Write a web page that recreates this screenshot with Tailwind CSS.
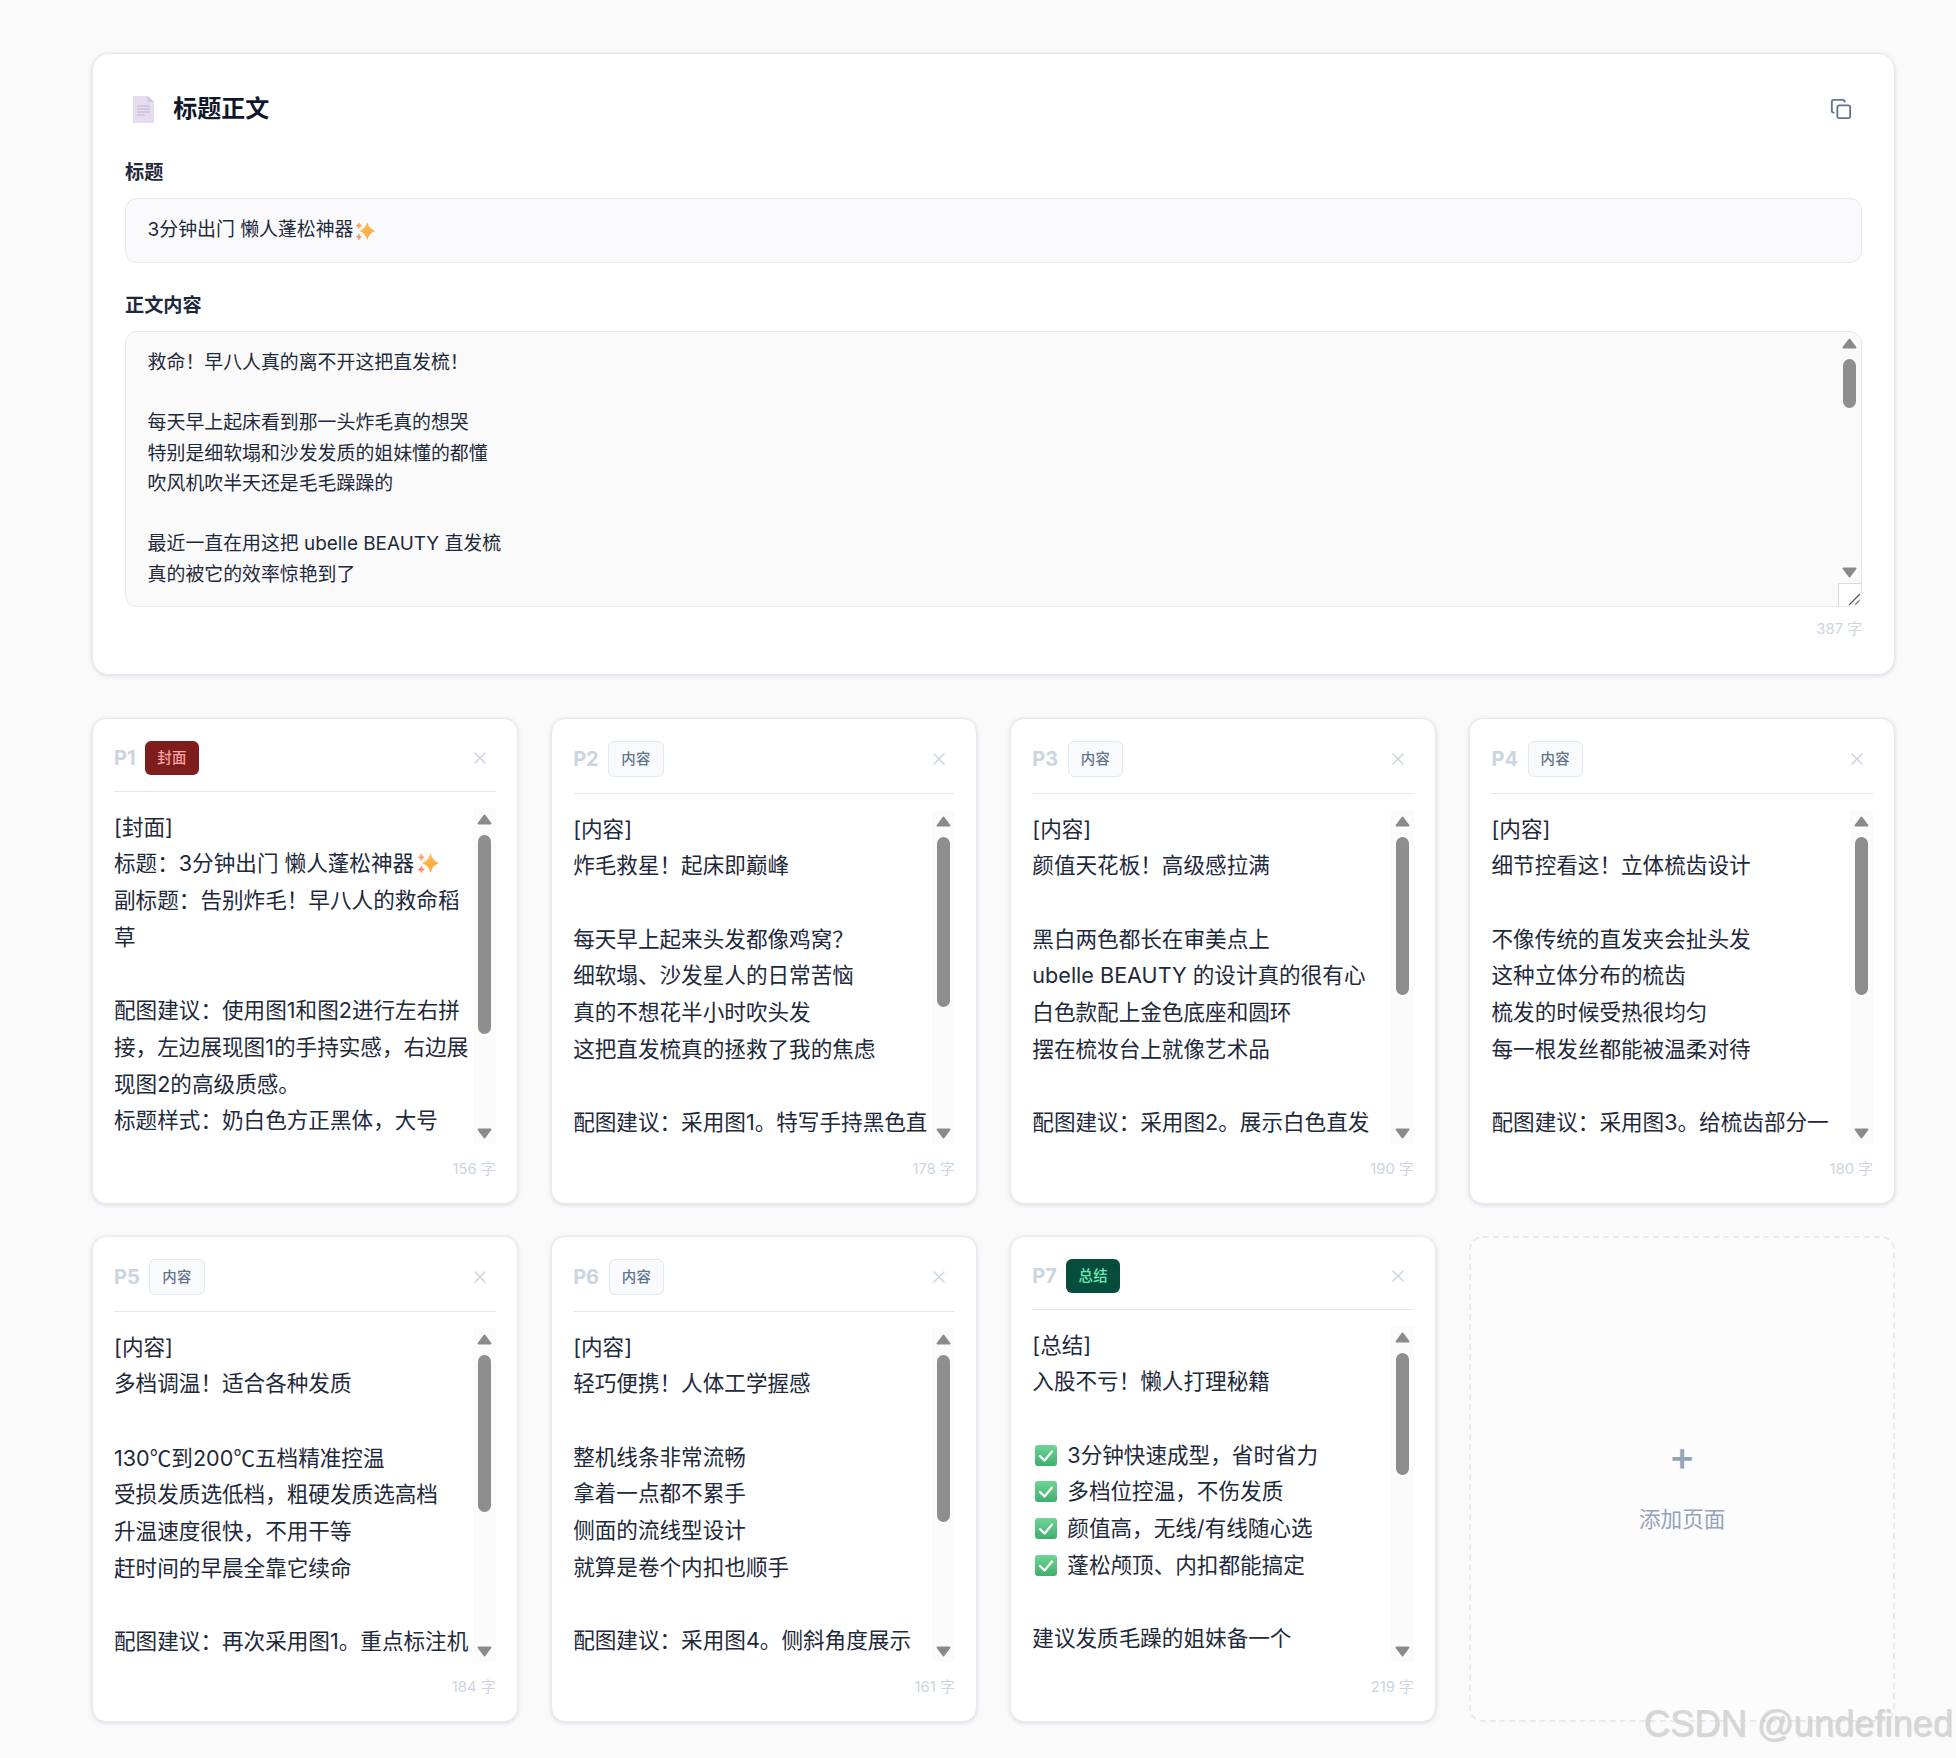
<!DOCTYPE html>
<html lang="zh-CN">
<head>
  <meta charset="UTF-8">
  <title>标题正文</title>
  <script src="https://cdn.jsdelivr.net/npm/@tailwindcss/browser@4"></script>
</head>
<body class="bg-[#fafafa] font-[Inter,'Noto_Sans_CJK_SC',sans-serif] min-h-[1758px] overflow-hidden relative">

<svg class="absolute w-0 h-0">
  <defs>
    <linearGradient id="star" x1="0" y1="0" x2="1" y2="1">
      <stop offset="0" stop-color="#ffc94d"/>
      <stop offset="1" stop-color="#ff9a3d"/>
    </linearGradient>
    <linearGradient id="tick" x1="0" y1="0" x2="0" y2="1">
      <stop offset="0" stop-color="#6fd596"/>
      <stop offset="1" stop-color="#3fae6c"/>
    </linearGradient>
    <symbol id="sparkles" viewBox="0 0 36 36">
      <path d="M22 2Q25.500 14.500 36 18Q25.500 21.500 22 34Q18.500 21.500 8 18Q18.500 14.500 22 2Z" fill="url(#star)"/>
      <path d="M7 2Q8 7 13 8.500Q8 10 7 15Q6 10 1 8.500Q6 7 7 2Z" fill="#ffa366"/>
      <path d="M7 22Q8 27 13 28.500Q8 30 7 35Q6 30 1 28.500Q6 27 7 22Z" fill="#ff8f73"/>
    </symbol>
    <symbol id="arrow-up" viewBox="0 0 15 11">
      <path d="M7.500 1.500L13.500 9.500H1.500Z" fill="#8a8a8a" stroke="#8a8a8a" stroke-width="2" stroke-linejoin="round"/>
    </symbol>
    <symbol id="arrow-down" viewBox="0 0 15 11">
      <path d="M1.500 1.500H13.500L7.500 9.500Z" fill="#8a8a8a" stroke="#8a8a8a" stroke-width="2" stroke-linejoin="round"/>
    </symbol>
    <symbol id="check" viewBox="0 0 22 22">
      <rect width="22" height="21" rx="3" fill="url(#tick)"/>
      <path d="M5 11L9.500 15.500L17 6.500" fill="none" stroke="#fff" stroke-width="2.200" stroke-linecap="round" stroke-linejoin="round"/>
    </symbol>
  </defs>
</svg>

<div class="ml-[92px] w-[1803px] pt-[53px]">

  <!-- title + body -->
  <section class="bg-white border border-[#e6eaf0] rounded-[17px] shadow-[0_1px_4px_rgba(148,163,184,0.35)] px-[32px] pt-[29px] h-[622px]">
    <div class="flex items-center h-[52px] mb-[25px]">
      <svg class="ml-[7.600px] w-[21px] h-[27px]" viewBox="0 0 20 27" preserveAspectRatio="none">
        <path d="M0 0H14L20 6V27H0Z" fill="#e6dcf0"/>
        <path d="M14 0L20 6H14Z" fill="#cfc6d8"/>
        <path d="M4 10H16M4 13H16M4 16H16M4 19H11" stroke="#bdb4c8" stroke-width="1.2"/>
      </svg>
      <h2 class="ml-[19.600px] text-[24px] font-bold text-[#0f172a]">标题正文</h2>
      <svg class="ml-auto mr-[10px] w-[22px] h-[22px]" viewBox="0 0 24 24" fill="none" stroke="#64748b" stroke-width="2" stroke-linecap="round" stroke-linejoin="round">
        <rect x="8" y="8" width="14" height="14" rx="2"/>
        <path d="M4 16c-1.1 0-2-.9-2-2V4c0-1.1.9-2 2-2h10c1.1 0 2 .9 2 2"/>
      </svg>
    </div>

    <label class="block text-[19.200px] leading-[24px] font-bold text-[#1e293b] mb-[14px]">标题</label>
    <div class="h-[65px] flex items-center px-[21.600px] bg-[#fafafc] border border-[#e2e8f0] rounded-[12px] text-[18.900px] text-[#1e293b]">3分钟出门 懒人蓬松神器<svg class="w-[20px] h-[20px] ml-[2px]" viewBox="0 0 36 36"><use href="#sparkles"/></svg></div>

    <label class="block mt-[30px] text-[19.200px] leading-[24px] font-bold text-[#1e293b] mb-[14px]">正文内容</label>
    <div class="h-[276px] flex bg-[#fafafa] border border-[#e2e8f0] rounded-[12px] overflow-hidden">
      <div class="flex-1 pl-[21.600px] pt-[16px] text-[18.900px] leading-[30.240px] text-[#1e293b] whitespace-pre-wrap">救命！早八人真的离不开这把直发梳！

每天早上起床看到那一头炸毛真的想哭
特别是细软塌和沙发发质的姐妹懂的都懂
吹风机吹半天还是毛毛躁躁的

最近一直在用这把 ubelle BEAUTY 直发梳
真的被它的效率惊艳到了</div>
      <div class="w-[23px] flex flex-col items-center">
        <svg class="mt-[6px] w-[15px] h-[11px]" viewBox="0 0 15 11"><use href="#arrow-up"/></svg>
        <div class="mt-[10px] w-[13px] h-[49px] rounded-full bg-[#8e8e8e]"></div>
        <svg class="mt-auto mb-[5px] w-[15px] h-[11px]" viewBox="0 0 15 11"><use href="#arrow-down"/></svg>
        <div class="w-[23px] h-[23px] bg-white border-l border-t border-[#d9d9d9] flex items-end justify-end">
          <svg class="w-[14px] h-[14px]" viewBox="0 0 14 14" stroke="#555" stroke-width="1.2" fill="none"><path d="M2 13L13 2M8 13L13 8"/></svg>
        </div>
      </div>
    </div>
    <p class="mt-[10px] text-right text-[14.800px] leading-[24px] text-[#cbd5e1]">387 字</p>
  </section>

  <div id="pages" class="grid grid-cols-4 gap-x-[33.600px] gap-y-[32px] mt-[43px]"></div>
</div>

<div class="absolute right-[3px] top-[1703px] font-['Liberation_Sans',sans-serif] text-[36.300px] leading-[42px] text-[#d6d6d6] [text-shadow:1px_1px_1px_rgba(120,120,120,0.3)]">CSDN @undefined</div>

<script>
  const star = `<svg class="inline-block align-[-3px] w-[22px] h-[22px] ml-[3px]" viewBox="0 0 36 36"><use href="#sparkles"/></svg>`;
  const tick = `<svg class="inline-block align-[-4px] w-[22px] h-[22px] ml-[3px] mr-[10px]" viewBox="0 0 22 22"><use href="#check"/></svg>`;
  const deg = `<span class="font-['Noto_Sans_CJK_SC',sans-serif]">℃</span>`;

  const pages = [
    { kind: "封面", badge: "bg-[#7f1d1d] text-[#fca5a5]", count: 156, thumb: 199,
      text: `[封面]\n标题：3分钟出门 懒人蓬松神器${star}\n副标题：告别炸毛！早八人的救命稻草\n\n配图建议：使用图1和图2进行左右拼接，左边展现图1的手持实感，右边展现图2的高级质感。\n标题样式：奶白色方正黑体，大号` },
    { kind: "内容", badge: "bg-[#f8fafc] border border-[#e2e8f0] text-[#64748b]", count: 178, thumb: 170,
      text: `[内容]\n炸毛救星！起床即巅峰\n\n每天早上起来头发都像鸡窝？\n细软塌、沙发星人的日常苦恼\n真的不想花半小时吹头发\n这把直发梳真的拯救了我的焦虑\n\n配图建议：采用图1。特写手持黑色直` },
    { kind: "内容", badge: "bg-[#f8fafc] border border-[#e2e8f0] text-[#64748b]", count: 190, thumb: 158,
      text: `[内容]\n颜值天花板！高级感拉满\n\n黑白两色都长在审美点上\nubelle BEAUTY 的设计真的很有心\n白色款配上金色底座和圆环\n摆在梳妆台上就像艺术品\n\n配图建议：采用图2。展示白色直发` },
    { kind: "内容", badge: "bg-[#f8fafc] border border-[#e2e8f0] text-[#64748b]", count: 180, thumb: 158,
      text: `[内容]\n细节控看这！立体梳齿设计\n\n不像传统的直发夹会扯头发\n这种立体分布的梳齿\n梳发的时候受热很均匀\n每一根发丝都能被温柔对待\n\n配图建议：采用图3。给梳齿部分一` },
    { kind: "内容", badge: "bg-[#f8fafc] border border-[#e2e8f0] text-[#64748b]", count: 184, thumb: 157,
      text: `[内容]\n多档调温！适合各种发质\n\n130${deg}到200${deg}五档精准控温\n受损发质选低档，粗硬发质选高档\n升温速度很快，不用干等\n赶时间的早晨全靠它续命\n\n配图建议：再次采用图1。重点标注机` },
    { kind: "内容", badge: "bg-[#f8fafc] border border-[#e2e8f0] text-[#64748b]", count: 161, thumb: 167,
      text: `[内容]\n轻巧便携！人体工学握感\n\n整机线条非常流畅\n拿着一点都不累手\n侧面的流线型设计\n就算是卷个内扣也顺手\n\n配图建议：采用图4。侧斜角度展示` },
    { kind: "总结", badge: "bg-[#064e3b] text-[#6ee7b7]", count: 219, thumb: 122,
      text: `[总结]\n入股不亏！懒人打理秘籍\n\n${tick}3分钟快速成型，省时省力\n${tick}多档位控温，不伤发质\n${tick}颜值高，无线/有线随心选\n${tick}蓬松颅顶、内扣都能搞定\n\n建议发质毛躁的姐妹备一个` },
  ];

  const cards = pages.map((p, i) => `
    <article class="flex flex-col bg-white border border-[#e6eaf0] rounded-[14px] shadow-[0_1px_4px_rgba(148,163,184,0.35)] px-[21px] pt-[21.600px] pb-[22px] h-[486px]">
      <div class="flex items-center pb-[16px] border-b border-[#e2e8f0] mb-[16px]">
        <span class="text-[20px] font-bold text-[#cbd5e1] mr-[9.600px]">P${i + 1}</span>
        <span class="px-[12px] py-[6px] rounded-[6px] text-[14.400px] leading-[22px] font-medium tracking-[0.3px] ${p.badge}">${p.kind}</span>
        <svg class="ml-auto mr-[10px] w-[12px] h-[12px]" viewBox="0 0 12 12" stroke="#cbd5e1" stroke-width="1.500" stroke-linecap="round"><path d="M1 1L11 11M11 1L1 11"/></svg>
      </div>
      <div class="flex flex-1 min-h-0 overflow-hidden">
        <div class="flex-1 min-w-0 pt-[1px] text-[21.600px] leading-[36.720px] text-[#1e293b] whitespace-pre-wrap">${p.text}</div>
        <div class="w-[23px] bg-[#fbfbfb] flex flex-col items-center shrink-0">
          <svg class="mt-[6px] w-[15px] h-[11px]" viewBox="0 0 15 11"><use href="#arrow-up"/></svg>
          <div class="mt-[10px] w-[13px] rounded-full bg-[#8e8e8e]" style="height:${p.thumb}px"></div>
          <svg class="mt-auto mb-[5px] w-[15px] h-[11px]" viewBox="0 0 15 11"><use href="#arrow-down"/></svg>
        </div>
      </div>
      <p class="mt-[13px] text-right text-[14.800px] leading-[24px] text-[#cbd5e1]">${p.count} 字</p>
    </article>`).join("");

  document.getElementById("pages").innerHTML = cards + `
    <button class="h-[486px] pt-[9px] bg-[#fcfcfd] border-2 border-dashed border-[#e6ebf2] rounded-[14px] flex flex-col items-center justify-center text-[#94a3b8]">
      <span class="text-[40px] leading-[48px] font-medium">+</span>
      <span class="mt-[23px] text-[21.600px] leading-[32px]">添加页面</span>
    </button>`;
</script>
</body>
</html>
